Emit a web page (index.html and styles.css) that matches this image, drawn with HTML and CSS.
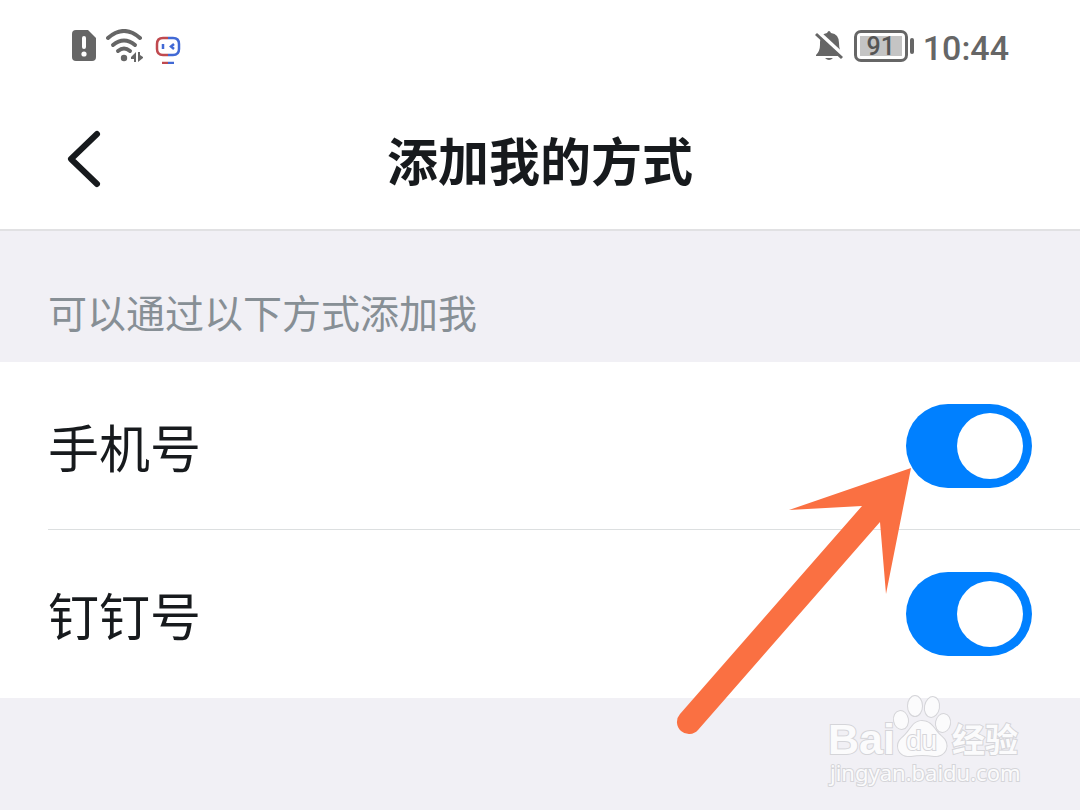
FILE: index.html
```html
<!DOCTYPE html>
<html lang="zh-CN">
<head>
  <meta charset="UTF-8">
  <meta name="viewport" content="width=device-width, initial-scale=1">
  <title>添加我的方式</title>
  <link rel="stylesheet" href="styles.css">
</head>
<body>

<!-- Status bar -->
<div class="status-bar">
  <div class="status-group">
    <svg viewBox="0 0 26 34" width="26" height="34">
      <path d="M5 1H17L25 9V28Q25 32 21 32H5Q1 32 1 28V5Q1 1 5 1Z" fill="#666"/>
      <path d="M13 9V18" stroke="#fff" stroke-width="4" stroke-linecap="round"/>
      <circle cx="13" cy="25" r="2.6" fill="#fff"/>
    </svg>
    <svg viewBox="0 0 40 34" width="40" height="34">
      <g fill="none" stroke="#666" stroke-width="4" stroke-linecap="round">
        <path d="M2 9Q18 -5 34 9"/>
        <path d="M7 16Q18 7 29 16"/>
        <path d="M12 22Q18 17 24 22"/>
      </g>
      <circle cx="18" cy="29" r="3.2" fill="#666"/>
      <path d="M30 23V33H28V30H25V28ZM32 23H34V26L37 28V29L32 33Z" fill="#666"/>
    </svg>
    <svg class="icon-bot" viewBox="0 0 26 28" width="26" height="28" fill="none" stroke-width="2.500">
      <path d="M13 2H8Q2 2 2 8V13Q2 19 8 19H13" stroke="#c0494f"/>
      <path d="M13 2H18Q24 2 24 8V13Q24 19 18 19H13" stroke="#4169d5"/>
      <path d="M8 8V13M19 8L16 10.500L19 13" stroke="#4169d5"/>
      <path d="M7 27H13" stroke="#c0494f"/>
      <path d="M13 27H19" stroke="#4169d5"/>
    </svg>
  </div>
  <div class="status-group">
    <svg viewBox="0 0 32 34" width="32" height="34">
      <path d="M3 27V26Q7 22 7 16V13Q7 5 14 4Q16 0 18 4Q26 5 26 14Q26 22 30 26V27Z" fill="#666"/>
      <path d="M5 3L32 28" stroke="#fff" stroke-width="4"/>
      <path d="M3 5L29 29" stroke="#666" stroke-width="3"/>
      <path d="M12 29H20Q16 33 12 29Z" fill="#666"/>
    </svg>
    <div class="battery"><span class="battery-level">91</span></div>
    <span class="time">10:44</span>
  </div>
</div>

<header>
  <button class="back" aria-label="返回">
    <svg viewBox="0 0 36 60" width="36" height="60">
      <path d="M31 5L5 30L31 55" fill="none" stroke="#171a1d" stroke-width="6" stroke-linecap="round" stroke-linejoin="round"/>
    </svg>
  </button>
  <h1>添加我的方式</h1>
</header>

<main>
  <h2>可以通过以下方式添加我</h2>
  <div class="settings">
    <div class="row">
      <label for="phone">手机号</label>
      <input type="checkbox" class="switch" id="phone" checked>
    </div>
    <div class="row">
      <label for="dingtalk">钉钉号</label>
      <input type="checkbox" class="switch" id="dingtalk" checked>
    </div>

    <!-- Pointer to the first switch -->
    <svg class="arrow" viewBox="0 0 240 270" width="240" height="270">
      <path d="M236 2L114 44L187 40L5 248A12 12 0 0 0 23 264L205 56L211 128Z" fill="#fa7042"/>
    </svg>
  </div>

  <!-- Watermark -->
  <svg class="watermark" viewBox="0 0 200 94" width="200" height="94">
    <g class="mark">
      <text class="mark-bai" x="2" y="59">Bai</text>
      <ellipse cx="75" cy="25" rx="7" ry="9" transform="rotate(-10 75 25)"/>
      <ellipse cx="89" cy="11" rx="7" ry="10"/>
      <ellipse cx="106" cy="12" rx="7" ry="10" transform="rotate(10 106 12)"/>
      <ellipse cx="117" cy="28" rx="7" ry="9" transform="rotate(10 117 28)"/>
      <path d="M96 26C106 26 108 35 115 41C126 50 119 62 108 61Q96 59 85 61C71 62 69 49 76 43C85 36 86 26 96 26Z"/>
      <text class="mark-du" x="80" y="55">du</text>
      <text class="mark-cn" x="126" y="57">经验</text>
      <text class="mark-url" x="4" y="86">jingyan.baidu.com</text>
    </g>
  </svg>
</main>

</body>
</html>
```
FILE: styles.css
```css
* {
  box-sizing: border-box;
}

body {
  font-family: "Noto Sans CJK SC", sans-serif;
  margin: 0;
  min-height: 100vh;
  display: flex;
  flex-direction: column;
  background: #f1f0f5;
  color: #171a1d;
}

.status-bar {
  display: flex;
  justify-content: space-between;
  align-items: center;
  height: 92px;
  padding: 0 71px;
  background: #fff;
}

.status-group {
  display: flex;
  align-items: center;
  gap: 9px;
}

.icon-bot {
  margin-top: 8px;
}

.battery {
  position: relative;
  width: 54px;
  height: 32px;
  padding: 3px;
  border: 3px solid #666;
  border-radius: 7px;
}

.battery::after {
  content: "";
  position: absolute;
  top: 5px;
  right: -9px;
  width: 4px;
  height: 16px;
  border-radius: 2px;
  background: #666;
}

.battery-level {
  display: block;
  height: 20px;
  background: #c4c4c4;
  color: #555;
  font: 500 25px/22px Roboto, sans-serif;
  text-align: center;
}

.time {
  margin-left: 6px;
  padding-top: 4px;
  color: #666;
  font: 500 34px/40px Roboto, sans-serif;
}

header {
  position: relative;
  display: flex;
  align-items: center;
  justify-content: center;
  height: 139px;
  padding-bottom: 4px;
  border-bottom: 2px solid #e1e1e3;
  background: #fff;
}

.back {
  position: absolute;
  left: 66px;
  display: flex;
  padding: 0;
  border: none;
  background: none;
  cursor: pointer;
}

h1 {
  margin: 0;
  font-size: 51px;
  line-height: 76px;
}

main {
  position: relative;
  flex: 1;
}

h2 {
  margin: 0;
  padding: 51px 48px 22px;
  color: #878f95;
  font-size: 39px;
  font-weight: 400;
  line-height: 58px;
}

.settings {
  position: relative;
  padding-left: 48px;
  background: #fff;
}

.row {
  display: flex;
  align-items: center;
  justify-content: space-between;
  height: 168px;
  padding-right: 48px;
}

.row:first-child {
  border-bottom: 1px solid #dcdfe0;
}

.row label {
  font-size: 51px;
  line-height: 76px;
}

.switch {
  appearance: none;
  width: 126px;
  height: 84px;
  margin: 0;
  padding: 9px;
  border-radius: 42px;
  background: #ccc;
  cursor: pointer;
}

.switch::before {
  content: "";
  display: block;
  width: 66px;
  height: 66px;
  border-radius: 50%;
  background: #fff;
}

.switch:checked {
  background: #0080ff;
}

.switch:checked::before {
  margin-left: auto;
}

.arrow {
  position: absolute;
  top: 104px;
  right: 165px;
  pointer-events: none;
}

.watermark {
  position: absolute;
  right: 54px;
  bottom: 21px;
}

.mark {
  fill: #fbfbfc;
  stroke: #d5d5d9;
  stroke-width: 2px;
  paint-order: stroke;
}

.mark-bai {
  font: bold 43px "Liberation Sans", sans-serif;
}

.mark-du {
  font: 28px "Liberation Sans", sans-serif;
}

.mark-cn {
  font: bold 33px "Noto Sans CJK SC", sans-serif;
}

.mark-url {
  font: 22px "Noto Sans", sans-serif;
}
```
